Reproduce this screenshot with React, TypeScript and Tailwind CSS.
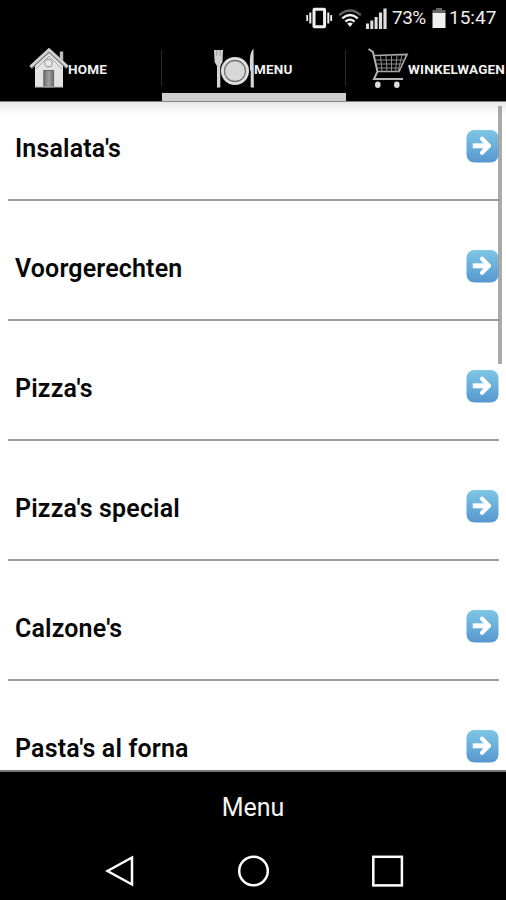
import React from 'react';

interface Category {
  id: number;
  name: string;
}

const CATEGORIES: Category[] = [
  { id: 1, name: "Insalata's" },
  { id: 2, name: 'Voorgerechten' },
  { id: 3, name: "Pizza's" },
  { id: 4, name: "Pizza's special" },
  { id: 5, name: "Calzone's" },
  { id: 6, name: "Pasta's al forna" },
];

const VibrateIcon = () => (
  <svg width="28" height="22" viewBox="0 0 28 22" fill="none" stroke="#f2f2f2" className="shrink-0">
    <rect x="9" y="2.2" width="10.6" height="17.6" rx="0.5" strokeWidth="3" />
    <path d="M5.3 5.5v11M23.3 5.5v11" strokeWidth="2" />
    <path d="M2.2 8v6M26.2 8v6" strokeWidth="1.8" />
  </svg>
);

const WifiIcon = () => (
  <svg width="24" height="19" viewBox="0 0 24 19" fill="none" className="shrink-0">
    <path d="M1.2 6.2Q12 -3.2 22.8 6.2" stroke="#626262" strokeWidth="2.2" />
    <path d="M4.2 9.4Q12 2.6 19.8 9.4" stroke="#f2f2f2" strokeWidth="2.3" />
    <path d="M7.4 12.6Q12 8.6 16.6 12.6" stroke="#f2f2f2" strokeWidth="2.3" />
    <path d="M9.2 14.4Q12 12.6 14.8 14.4L12 18Z" fill="#f2f2f2" />
  </svg>
);

const SignalIcon = () => (
  <svg width="21" height="21" viewBox="0 0 21 21" fill="#dedede" className="shrink-0">
    <rect x="0" y="15.5" width="3" height="5.5" />
    <rect x="4.3" y="12.5" width="3" height="8.5" />
    <rect x="8.6" y="9" width="3" height="12" />
    <rect x="12.9" y="4.5" width="3.2" height="16.5" />
    <rect x="17.4" y="0.5" width="3.2" height="20.5" />
  </svg>
);

const BatteryIcon = () => (
  <svg width="14" height="20" viewBox="0 0 14 20" className="shrink-0">
    <path d="M4 0h6v2h3.5v4H.5V2H4z" fill="#666" />
    <rect x="0.5" y="5" width="13" height="15" fill="#f0f0f0" />
  </svg>
);

const HouseIcon = () => (
  <svg width="40" height="42" viewBox="0 0 40 42" className="shrink-0">
    <defs>
      <linearGradient id="door" x1="0" y1="0" x2="1" y2="0">
        <stop offset="0" stopColor="#6c6c6c" />
        <stop offset="0.5" stopColor="#a2a2a2" />
        <stop offset="1" stopColor="#6a6a6a" />
      </linearGradient>
    </defs>
    <rect x="30.8" y="3.5" width="3.4" height="12" fill="#bdbdbd" />
    <path d="M6 17L20 4l14 13v22H6z" fill="#e3e3e3" />
    <path d="M7 21L20 8l13 13" fill="none" stroke="#aaa" strokeWidth="1" />
    <path d="M1.5 19.5L20 2.3L38.5 19.5" fill="none" stroke="#777" strokeWidth="4" />
    <path d="M1.5 18.7L20 1.8L38.5 18.7" fill="none" stroke="#d2d2d2" strokeWidth="2.6" />
    <circle cx="19.5" cy="15" r="3.8" fill="#e8e8e8" stroke="#aaa" strokeWidth="1.4" />
    <rect x="14.8" y="22.5" width="9.8" height="16.5" fill="url(#door)" stroke="#666" strokeWidth="1" />
    <path d="M6 39h28" stroke="#bcbcbc" />
  </svg>
);

const PlateIcon = () => (
  <svg width="42" height="42" viewBox="0 0 42 42" className="shrink-0">
    <path d="M1 2h9l-.5 12-2.2 4V39.5H4V18L1.6 14z" fill="#d2d2d2" />
    <path d="M3.8 2v6M7.2 2v6" stroke="#888" strokeWidth="0.7" />
    <circle cx="22" cy="23" r="14" fill="#e0e0e0" />
    <circle cx="22" cy="23" r="10.5" fill="#d8d8d8" stroke="#777" strokeWidth="1.3" />
    <path d="M40.5 0.5q-3.5 4-3.6 11v11h.8v17h3.2z" fill="#d6d6d6" />
  </svg>
);

const CartIcon = () => (
  <svg width="42" height="42" viewBox="0 0 42 42" fill="none" className="shrink-0">
    <path d="M1.5 1L6 4L10.5 23.5L7 31H36" stroke="#b4b4b4" strokeWidth="2" />
    <path d="M7.5 7.5L40 6.5L32 23.5H10.5" stroke="#aaa" strokeWidth="1.7" />
    <path
      d="M8.5 12H37.5M9.3 16H35.6M10 20H33.8M13.5 8L15 23.5M19 8L20 23.5M24.5 8V23.5M30 7.5L28.5 23.5M35 7L31 23.5"
      stroke="#8c8c8c"
      strokeWidth="1"
    />
    <ellipse cx="10.8" cy="36.7" rx="2.8" ry="3.2" fill="#dedede" />
    <ellipse cx="29.8" cy="36.7" rx="2.8" ry="3.2" fill="#dedede" />
  </svg>
);

const ArrowIcon = ({ id }: { id: number }) => (
  <svg width="33" height="33" viewBox="0 0 33 33" className="shrink-0">
    <defs>
      <linearGradient id={`arrow-${id}`} x1="0" y1="0" x2="0" y2="1">
        <stop offset="0" stopColor="#7fc6e4" />
        <stop offset="0.55" stopColor="#67add9" />
        <stop offset="1" stopColor="#5797cf" />
      </linearGradient>
    </defs>
    <rect x="0.5" y="0" width="32" height="32.5" rx="8" fill={`url(#arrow-${id})`} />
    <path d="M6.8 15.8h14" fill="none" stroke="#fff" strokeWidth="5" />
    <path
      d="M16 8.8l7 7l-7 7"
      fill="none"
      stroke="#fff"
      strokeWidth="4.2"
      strokeLinecap="round"
      strokeLinejoin="round"
    />
  </svg>
);

const StatusBar = () => (
  <header className="flex h-9 shrink-0 items-center pl-[305px] text-[19px] text-[#eee]">
    <VibrateIcon />
    <span className="ml-[5px] flex"><WifiIcon /></span>
    <span className="ml-1 flex"><SignalIcon /></span>
    <span className="ml-[5px] w-[40px] tracking-[-0.5px]">73%</span>
    <BatteryIcon />
    <span className="ml-[3px]">15:47</span>
  </header>
);

interface TabProps {
  label: string;
  icon: React.ReactNode;
  className: string;
  divider?: boolean;
}

const Tab: React.FC<TabProps> = ({ label, icon, className, divider }) => (
  <div className={`flex h-[65px] shrink-0 ${className}`}>
    <div className="mt-3 flex h-[42px] items-center self-start">
      {icon}
      <span className="-ml-px">{label}</span>
    </div>
    {divider && <div className="ml-auto mt-3.5 h-9 w-px bg-[#292929]" />}
  </div>
);

const App: React.FC = () => {
  return (
    <div className="flex h-[900px] w-[506px] flex-col overflow-hidden bg-black font-['Roboto',sans-serif]">
      <StatusBar />

      <nav className="flex h-[65px] shrink-0 overflow-hidden text-[13.5px] font-bold tracking-[0.2px] text-[#f2f2f2]">
        <Tab label="HOME" icon={<HouseIcon />} className="w-[162px] pl-[29px]" divider />
        <Tab
          label="MENU"
          icon={<PlateIcon />}
          className="w-[184px] border-b-8 border-[#cecece] pl-[51px]"
          divider
        />
        <Tab label="WINKELWAGEN" icon={<CartIcon />} className="w-[184px] pl-[21px]" />
      </nav>

      <main className="relative h-[671px] shrink-0 overflow-hidden border-t border-b-2 border-t-[#858585] border-b-[#777] bg-white bg-linear-to-b from-[#e9e9e9] to-white to-[14px]">
        {/* list is scrolled a little past its first row */}
        <ul className="-mt-[21px] pl-2 pr-[7px]">
          {CATEGORIES.map((category) => (
            <li
              key={category.id}
              className="flex h-[120px] items-center justify-between border-b-2 border-[#9c9c9c] pl-[7px] pt-3"
            >
              <span className="pt-1.5 text-[25px] font-semibold tracking-[0.15px] text-[#080808]">
                {category.name}
              </span>
              <ArrowIcon id={category.id} />
            </li>
          ))}
        </ul>
        <div className="absolute right-1 top-1 h-[258px] w-1 bg-[#8c8c8c]/75" />
      </main>

      <div className="flex h-[70px] shrink-0 items-center justify-center pt-0.5 text-[25px] text-[#f4f4f4]">
        Menu
      </div>

      <footer className="flex h-[58px] shrink-0 items-center justify-between pl-[105px] pr-[102px]">
        <svg width="29" height="32" viewBox="0 0 29 32" fill="none" stroke="#fff" strokeWidth="2.5">
          <path d="M27 2.5V29.5L2.5 16Z" />
        </svg>
        <svg width="32" height="32" viewBox="0 0 32 32" fill="none" stroke="#fff" strokeWidth="2.5">
          <circle cx="16.5" cy="16" r="14.3" />
        </svg>
        <svg width="32" height="32" viewBox="0 0 32 32" fill="none" stroke="#fff" strokeWidth="2.5">
          <rect x="1.3" y="1.8" width="28.6" height="28.6" />
        </svg>
      </footer>
    </div>
  );
};

export default App;
